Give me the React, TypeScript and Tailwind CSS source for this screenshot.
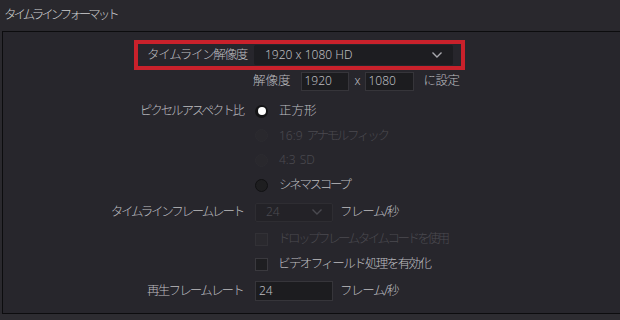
import React from "react";

const FONT = { fontFamily: '"Noto Sans", "Noto Sans CJK JP", sans-serif' };

function Chevron({ dim }: { dim?: boolean }) {
  return (
    <svg width="12" height="8" viewBox="0 0 12 8" className="shrink-0">
      <polyline
        points="1.5,1.5 6,6 10.5,1.5"
        fill="none"
        stroke={dim ? "#4a4a50" : "#a8a8ad"}
        strokeWidth="1.4"
      />
    </svg>
  );
}

function Radio({ state }: { state: "on" | "off" | "disabled" }) {
  if (state === "on")
    return (
      <span className="w-[13px] h-[13px] rounded-full bg-[#141416] flex items-center justify-center shrink-0">
        <span className="w-[8px] h-[8px] rounded-full bg-white" />
      </span>
    );
  if (state === "off")
    return <span className="w-[13px] h-[13px] rounded-full bg-[#1e1e20] border border-[#111113] shrink-0" />;
  return <span className="w-[13px] h-[13px] rounded-full bg-[#29282d] border border-[#2c2b30] shrink-0" />;
}

function Checkbox({ disabled }: { disabled?: boolean }) {
  return disabled ? (
    <span className="w-[13px] h-[13px] bg-[#2a292e] border border-[#323136] shrink-0" />
  ) : (
    <span className="w-[13px] h-[13px] bg-[#1e1e21] border border-[#3a393e] shrink-0" />
  );
}

export default function App() {
  return (
    <div
      className="w-[620px] h-[320px] bg-[#2a292e] overflow-hidden text-[#bdbdc0] text-[12.5px] leading-none font-light"
      style={FONT}
    >
      <div className="h-[31px] pl-[4px] flex items-center text-[12.5px] tracking-[-3px] text-[#d0d0d2] bg-[#29282d]">
        タイムラインフォーマット
      </div>
      <div className="ml-[2px] w-[640px] h-[283px] bg-[#27262c] border-t border-l border-b border-[#0c0c0e]">
        {/* row 1: highlighted resolution */}
        <div className="mt-[8px] ml-[131px] w-[331px] h-[30px] border-[4px] border-[#c9212b] flex items-center pl-[9px] pr-[8px]">
          <span className="w-[96px] text-right whitespace-nowrap tracking-[-1.3px]">タイムライン解像度</span>
          <div className="ml-[11px] w-[199px] h-[20px] bg-[#1d1d21] rounded-[2px] flex items-center pl-[11px] pr-[10px] justify-between text-[12px] tracking-normal">
            <span>1920 x 1080 HD</span>
            <Chevron />
          </div>
        </div>
        {/* row 2: custom resolution */}
        <div className="h-[22px] flex items-center ml-[250px]">
          <span>解像度</span>
          <div className="ml-[10px] w-[48px] h-[19px] bg-[#1c1c1f] border border-[#36353a] flex items-center pl-[3px] text-[12px]">
            1920
          </div>
          <span className="ml-[6px] w-[10px] text-[12px]">x</span>
          <div className="w-[49px] h-[19px] bg-[#1c1c1f] border border-[#36353a] flex items-center pl-[3px] text-[12px]">
            1080
          </div>
          <span className="ml-[10px] tracking-[-0.5px]">に設定</span>
        </div>
        {/* pixel aspect */}
        <div className="mt-[7px] grid grid-cols-[240px_1fr] gap-x-[12px]">
          <div className="h-[24.6px] flex items-center justify-end tracking-[-2.1px] whitespace-nowrap">ピクセルアスペクト比</div>
          <div className="h-[24.6px] flex items-center gap-[11px]">
            <Radio state="on" />
            <span>正方形</span>
          </div>
          <div />
          <div className="h-[24.6px] flex items-center gap-[11px] text-[#4b4a50]">
            <Radio state="disabled" />
            <span className="whitespace-nowrap flex items-center">
              <span className="text-[12px]">16:9</span>
              <span className="ml-[4px] tracking-[-2.3px]">アナモルフィック</span>
            </span>
          </div>
          <div />
          <div className="h-[24.6px] flex items-center gap-[11px] text-[#4b4a50]">
            <Radio state="disabled" />
            <span className="whitespace-nowrap flex items-center text-[12px]">
              <span>4:3</span>
              <span className="ml-[4px]">SD</span>
            </span>
          </div>
          <div />
          <div className="h-[24.6px] flex items-center gap-[11px]">
            <Radio state="off" />
            <span className="tracking-[-2.3px]">シネマスコープ</span>
          </div>
        </div>
        {/* timeline frame rate */}
        <div className="mt-[3px] grid grid-cols-[240px_1fr] gap-x-[12px]">
          <div className="h-[24px] flex items-center justify-end tracking-[-2.2px] whitespace-nowrap">タイムラインフレームレート</div>
          <div className="h-[24px] flex items-center">
            <div className="w-[78px] h-[19px] bg-[#232227] border border-[#2e2d32] rounded-[2px] flex items-center justify-between pl-[10px] pr-[9px] text-[12px] text-[#4b4a50]">
              <span>24</span>
              <Chevron dim />
            </div>
            <span className="ml-[7px] tracking-[-1.4px]">フレーム/秒</span>
          </div>
          <div />
          <div className="mt-[2.5px] h-[25px] flex items-center gap-[10px] text-[#4b4a50]">
            <Checkbox disabled />
            <span className="tracking-[-2.5px]">ドロップフレームタイムコードを使用</span>
          </div>
          <div />
          <div className="h-[25px] flex items-center gap-[10px]">
            <Checkbox />
            <span className="tracking-[-1.6px]">ビデオフィールド処理を有効化</span>
          </div>
          <div className="mt-[2.5px] h-[24px] flex items-center justify-end tracking-[-1.8px] whitespace-nowrap">再生フレームレート</div>
          <div className="mt-[2.5px] h-[24px] flex items-center">
            <div className="w-[78px] h-[20px] bg-[#1c1c1f] border border-[#36353a] flex items-center pl-[3px] text-[12px]">
              24
            </div>
            <span className="ml-[7px] tracking-[-1.4px]">フレーム/秒</span>
          </div>
        </div>
      </div>
      <div className="h-[6px] bg-[#2d2c31]" />
    </div>
  );
}
